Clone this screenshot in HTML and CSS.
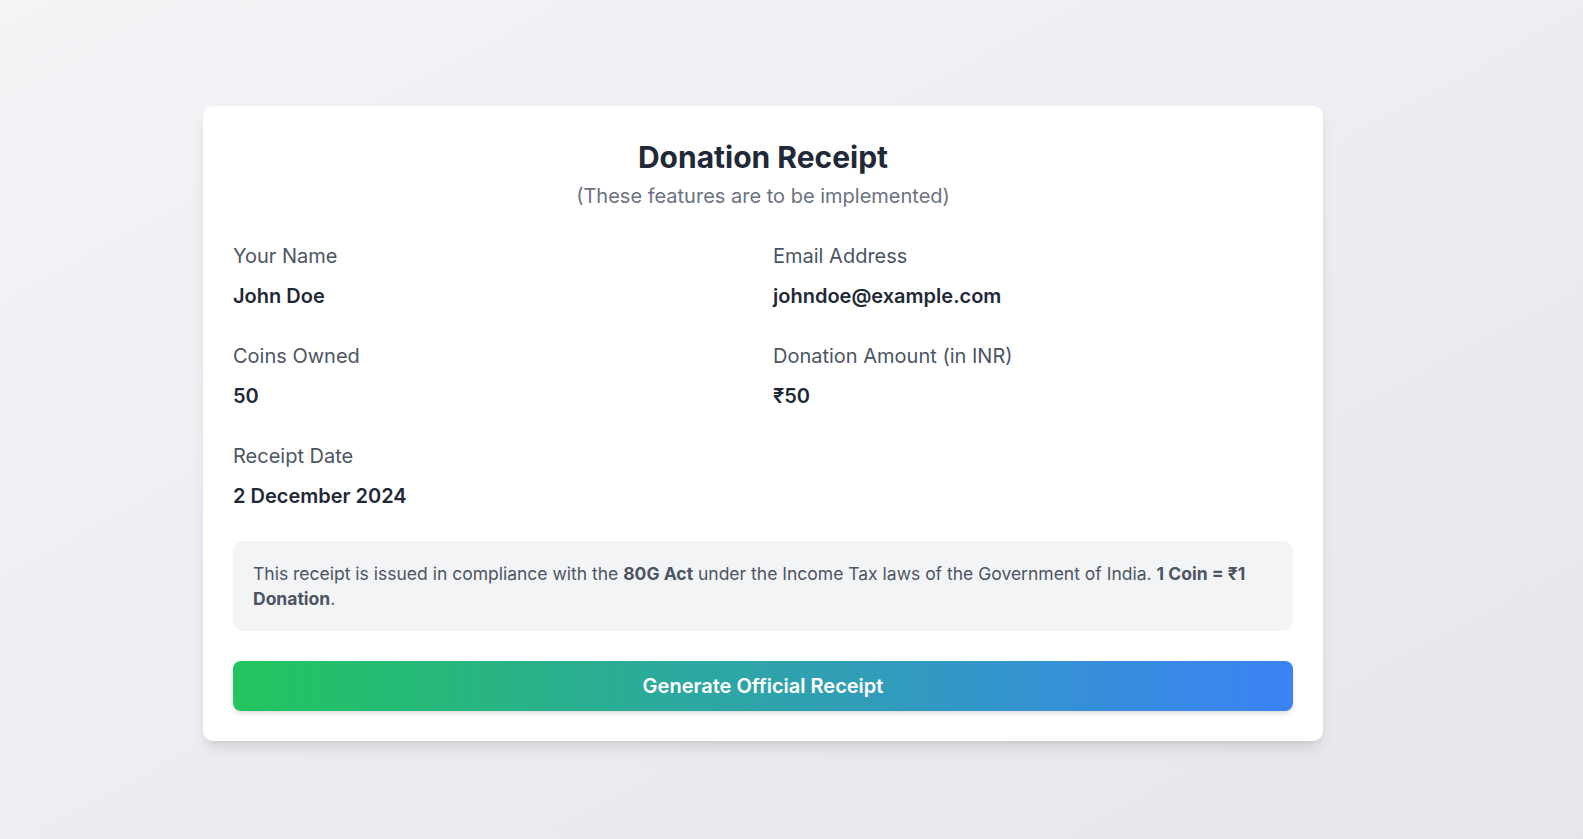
FILE: index.html
```html
<!DOCTYPE html>
<html lang="en">
<head>
<meta charset="utf-8">
<title>Donation Receipt</title>
<link rel="stylesheet" href="styles.css">
</head>
<body>
<main class="page">
  <section class="card">
    <header class="head">
      <h1 class="title">Donation Receipt</h1>
      <p class="subtitle">(These features are to be implemented)</p>
    </header>
    <div class="fields">
      <div class="field">
        <div class="label">Your Name</div>
        <div class="value">John Doe</div>
      </div>
      <div class="field">
        <div class="label">Email Address</div>
        <div class="value">johndoe@example.com</div>
      </div>
      <div class="field">
        <div class="label">Coins Owned</div>
        <div class="value">50</div>
      </div>
      <div class="field">
        <div class="label">Donation Amount (in INR)</div>
        <div class="value">₹50</div>
      </div>
      <div class="field">
        <div class="label">Receipt Date</div>
        <div class="value">2 December 2024</div>
      </div>
    </div>
    <div class="note">
      This receipt is issued in compliance with the <strong>80G Act</strong> under the Income Tax laws of the Government of India. <strong>1 Coin = ₹1 Donation</strong>.
    </div>
    <button class="btn" type="button">Generate Official Receipt</button>
  </section>
</main>
</body>
</html>
```
FILE: styles.css
```css
* { box-sizing: border-box; }
html, body { margin: 0; padding: 0; }
body {
  font-family: Inter, "Noto Sans", "Liberation Sans", sans-serif;
  background: linear-gradient(to bottom right, #f3f4f6, #e5e7eb);
  min-height: 100vh;
}
.page {
  min-height: 100vh;
  display: flex;
  align-items: center;
  justify-content: center;
  padding: 8px 57px 0 0;
}
.card {
  width: 1120px;
  background: #ffffff;
  border-radius: 10px;
  padding: 30px;
  box-shadow: 0 10px 15px -3px rgba(0,0,0,0.1), 0 4px 6px -4px rgba(0,0,0,0.1);
}
.head { text-align: center; margin-bottom: 32px; }
.title {
  margin: 3px 0 0;
  font-size: 30px;
  line-height: 36px;
  font-weight: 700;
  color: #1f2937;
}
.subtitle {
  margin: 7px 0 0;
  font-size: 20px;
  line-height: 28px;
  color: #6b7280;
}
.fields {
  display: grid;
  grid-template-columns: 1fr 1fr;
  column-gap: 20px;
  row-gap: 32px;
}
.label {
  font-size: 20px;
  line-height: 28px;
  color: #4b5563;
}
.value {
  margin-top: 12px;
  font-size: 20px;
  line-height: 28px;
  font-weight: 600;
  color: #1f2937;
}
.note {
  margin-top: 31px;
  background: #f3f4f6;
  border-radius: 10px;
  padding: 20px;
  font-size: 17.5px;
  line-height: 25px;
  color: #4b5563;
}
.note strong { font-weight: 700; color: #4b5563; }
.btn {
  display: block;
  width: 100%;
  margin-top: 30px;
  height: 50px;
  border: 0;
  border-radius: 8px;
  background: linear-gradient(to right, #22c55e, #3b82f6);
  color: #ffffff;
  font-family: inherit;
  font-size: 20px;
  font-weight: 600;
  box-shadow: 0 4px 6px -1px rgba(0,0,0,0.1), 0 2px 4px -2px rgba(0,0,0,0.1);
  cursor: pointer;
}
```
